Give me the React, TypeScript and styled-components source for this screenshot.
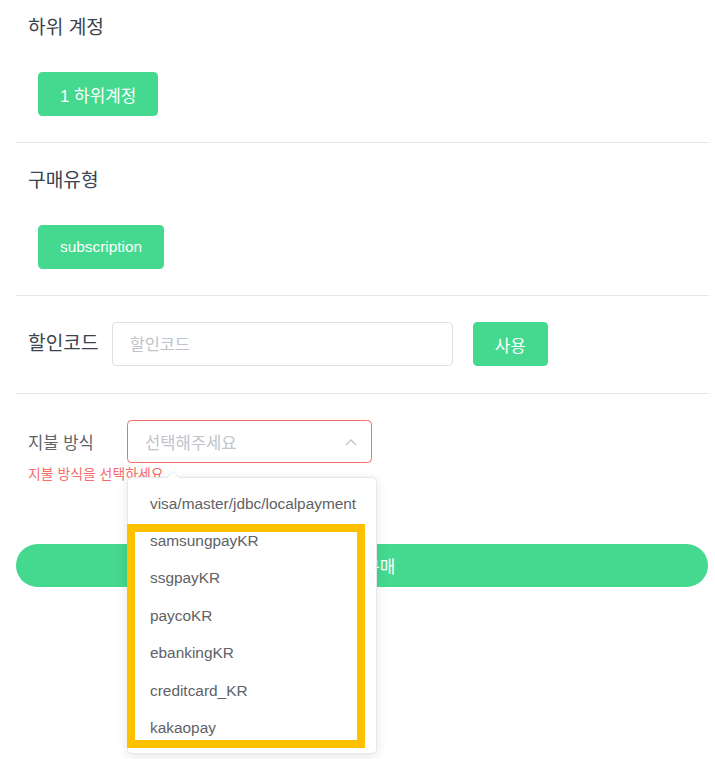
import styled, { createGlobalStyle } from "styled-components";

const GlobalStyle = createGlobalStyle`
  html, body {
    margin: 0;
    padding: 0;
    background: #ffffff;
  }
  body {
    font-family: "Liberation Sans", "Noto Sans CJK KR", Arial, sans-serif;
  }
  * {
    box-sizing: border-box;
  }
`;

const Page = styled.div`
  position: relative;
  padding: 0 6px 0 16px;
  width: 715px;
  min-height: 759px;
`;

const Section = styled.section<{ $first?: boolean }>`
  padding: ${(p) => (p.$first ? "16px" : "26px")} 12px 26px;
  border-bottom: 1px solid #e4e7ed;
`;

const RowSection = styled.section`
  display: flex;
  align-items: center;
  padding: 26px 12px 27px;
  border-bottom: 1px solid #e4e7ed;
`;

const PaySection = styled.section`
  padding: 26px 12px 0;
`;

const Title = styled.h3`
  margin: 0;
  font-size: 19.2px;
  line-height: 24px;
  font-weight: 400;
  color: #3a4350;
`;

const Chip = styled.button<{ $gap?: number; $ko?: boolean }>`
  display: inline-flex;
  align-items: center;
  justify-content: center;
  height: 44px;
  padding: 0 22px;
  margin-left: ${(p) => (p.$gap !== undefined ? p.$gap : 10)}px;
  margin-top: ${(p) => (p.$gap !== undefined ? 0 : 32)}px;
  border: none;
  border-radius: 4.4px;
  background: #44d98e;
  color: #ffffff;
  font-family: inherit;
  font-size: ${(p) => (p.$ko ? 16.9 : 15.4)}px;
`;

const CodeInput = styled.input`
  width: 341px;
  height: 44px;
  margin-left: 13px;
  padding: 0 17px;
  border: 1px solid #dcdfe6;
  border-radius: 4.4px;
  font-family: inherit;
  font-size: 16.4px;
  color: #606266;
  outline: none;
  &::placeholder {
    color: #c0c4cc;
  }
`;

const FieldRow = styled.div`
  display: flex;
  align-items: center;
`;

const FieldLabel = styled.label`
  width: 99px;
  font-size: 16.6px;
  color: #606266;
`;

const SelectWrap = styled.div`
  position: relative;
  width: 245px;
`;

const SelectBox = styled.div`
  display: flex;
  align-items: center;
  justify-content: space-between;
  height: 43px;
  padding: 0 14px 0 17px;
  border: 1px solid #f56c6c;
  border-radius: 4.4px;
  font-size: 16.6px;
  color: #c0c4cc;
`;

const ErrorText = styled.div`
  margin-top: 3px;
  font-size: 13.9px;
  line-height: 16px;
  color: #f56c6c;
`;

const Dropdown = styled.ul`
  position: absolute;
  top: calc(100% + 14px);
  left: 0;
  width: 250px;
  margin: 0;
  padding: 6.6px 0;
  list-style: none;
  background: #ffffff;
  border: 1px solid #e4e7ed;
  border-radius: 4.4px;
  box-shadow: 0 2px 12px 0 rgba(0, 0, 0, 0.1);
  z-index: 5;

  &::before,
  &::after {
    content: "";
    position: absolute;
    left: 38px;
    border: 7px solid transparent;
    border-top-width: 0;
  }
  &::before {
    top: -7px;
    border-bottom-color: #e4e7ed;
  }
  &::after {
    top: -6px;
    border-bottom-color: #ffffff;
  }
`;

const Option = styled.li`
  height: 37.4px;
  line-height: 37.4px;
  padding: 0 22px;
  font-size: 15.4px;
  color: #606266;
  white-space: nowrap;
`;

const Highlight = styled.div`
  position: absolute;
  left: -1px;
  top: 46px;
  width: 238px;
  height: 224px;
  border: 8px solid #ffc000;
  pointer-events: none;
`;

const BuyButton = styled.button`
  display: block;
  width: 692px;
  height: 43px;
  margin-top: 62px;
  border: none;
  border-radius: 22px;
  background: #44d98e;
  color: #ffffff;
  font-family: inherit;
  font-size: 16.9px;
`;

const Chevron = () => (
  <svg width="12" height="8" viewBox="0 0 12 8" fill="none">
    <path d="M1 7 L6 2 L11 7" stroke="#c0c4cc" strokeWidth="1.4" />
  </svg>
);

const methods = [
  "visa/master/jdbc/localpayment",
  "samsungpayKR",
  "ssgpayKR",
  "paycoKR",
  "ebankingKR",
  "creditcard_KR",
  "kakaopay",
];

export default function App() {
  return (
    <Page>
      <GlobalStyle />
      <Section $first>
        <Title>하위 계정</Title>
        <Chip $ko>1 하위계정</Chip>
      </Section>
      <Section>
        <Title>구매유형</Title>
        <Chip>subscription</Chip>
      </Section>
      <RowSection>
        <Title>할인코드</Title>
        <CodeInput placeholder="할인코드" />
        <Chip $gap={20} $ko>
          사용
        </Chip>
      </RowSection>
      <PaySection>
        <FieldRow>
          <FieldLabel>지불 방식</FieldLabel>
          <SelectWrap>
            <SelectBox>
              <span>선택해주세요</span>
              <Chevron />
            </SelectBox>
            <Dropdown>
              {methods.map((m) => (
                <Option key={m}>{m}</Option>
              ))}
              <Highlight />
            </Dropdown>
          </SelectWrap>
        </FieldRow>
        <ErrorText>지불 방식을 선택하세요</ErrorText>
      </PaySection>
      <BuyButton>바로 구매</BuyButton>
    </Page>
  );
}
